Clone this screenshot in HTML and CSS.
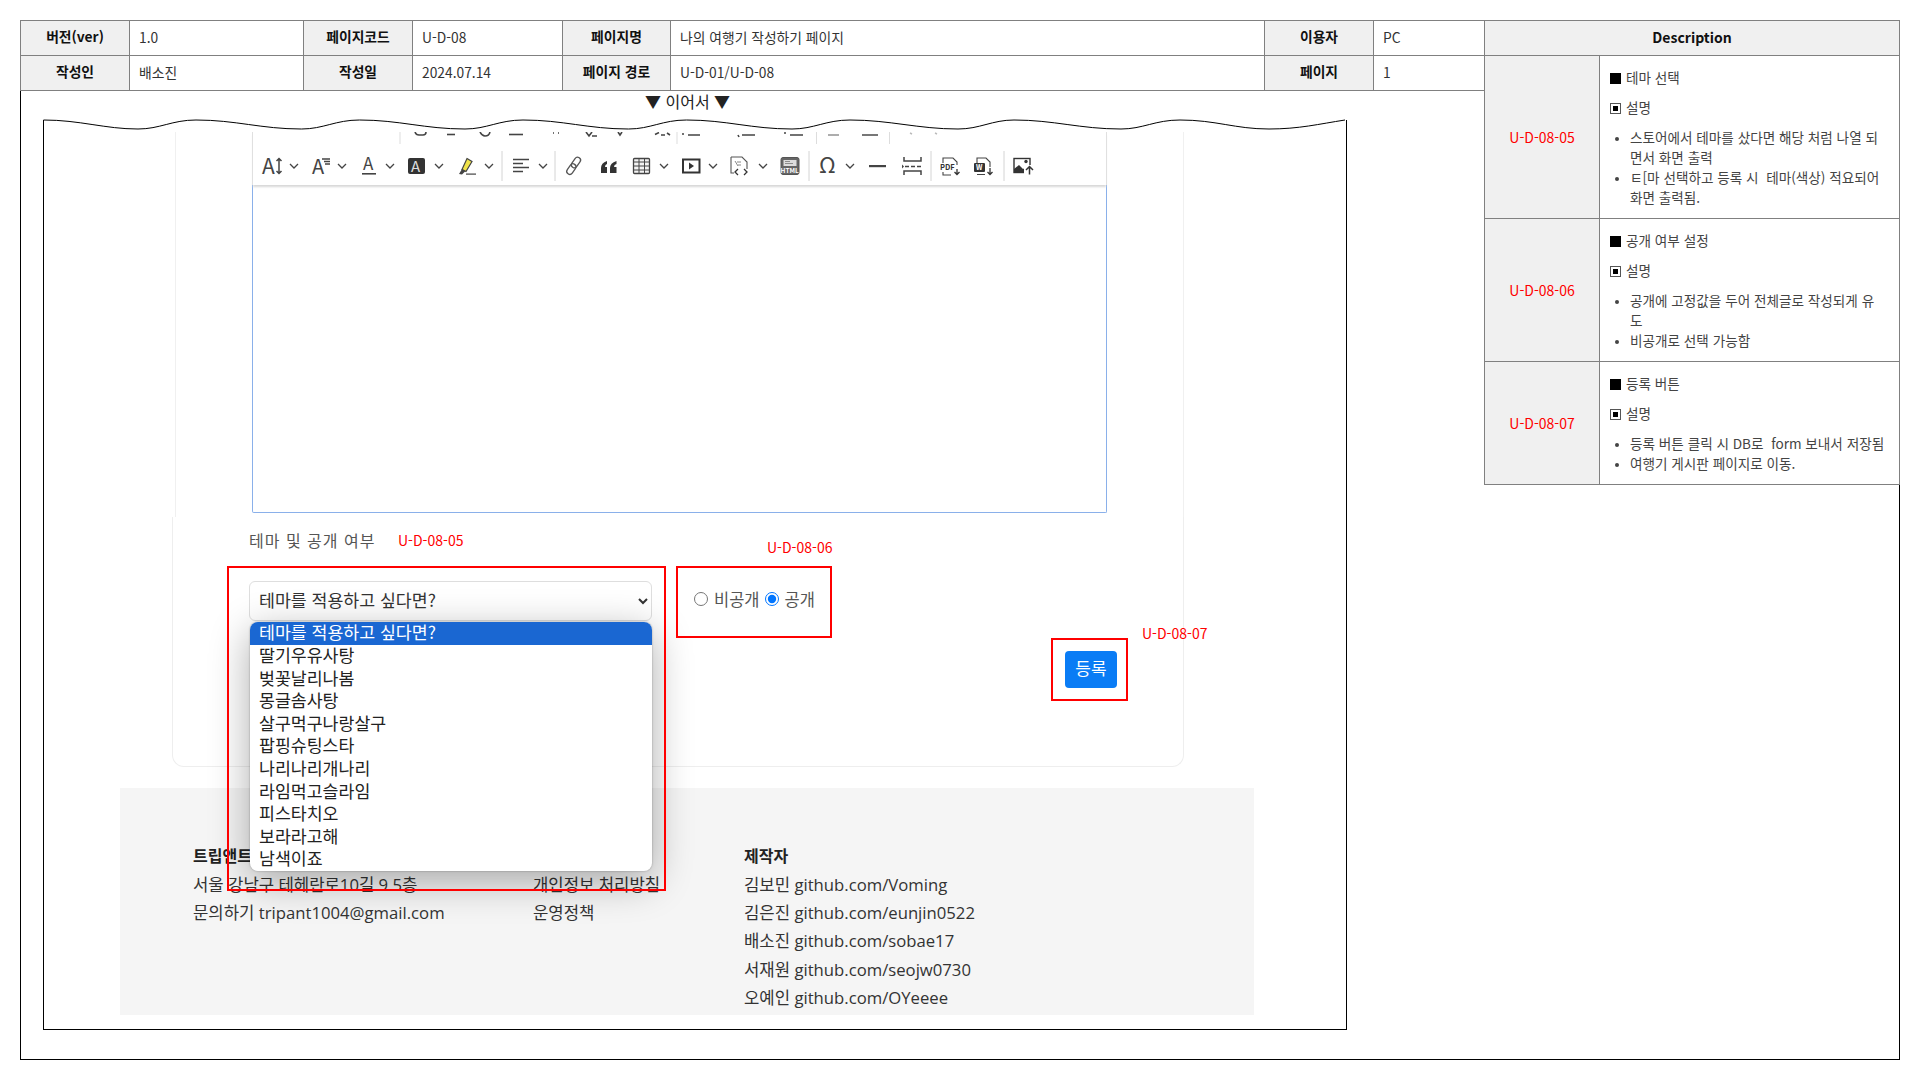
FILE: index.html
```html
<!DOCTYPE html>
<html lang="ko">
<head>
<meta charset="utf-8">
<title>나의 여행기 작성하기 페이지</title>
<link rel="stylesheet" href="styles.css">
</head>
<body>
<div class="sheet">
  <div class="left">
    <div class="meta">
      <div class="th">버전(ver)</div><div class="td">1.0</div>
      <div class="th">페이지코드</div><div class="td">U-D-08</div>
      <div class="th">페이지명</div><div class="td">나의 여행기 작성하기 페이지</div>
      <div class="th">이용자</div><div class="td">PC</div>
      <div class="th">작성인</div><div class="td">배소진</div>
      <div class="th">작성일</div><div class="td">2024.07.14</div>
      <div class="th">페이지 경로</div><div class="td">U-D-01/U-D-08</div>
      <div class="th">페이지</div><div class="td">1</div>
    </div>
    <div class="continued">▼ 이어서 ▼</div>
    <div class="frame">
      <svg class="wave" viewBox="43 117 1305 13" width="1305" height="13">
        <path d="M43.5 119 C80 119 105 128 138 128 c22 0 34 -9 58 -9 c40 0 65 9 105.5 9 c22 0 34 -9 58 -9 c40 0 65 9 105.5 9 c22 0 34 -9 58 -9 c40 0 65 9 105.5 9 c22 0 34 -9 58 -9 c40 0 65 9 105.5 9 c22 0 34 -9 58 -9 c40 0 68 9 108 9 c22 0 34 -9 56 -9 c40 0 66 9 107 9 c22 0 34 -9 59 -9 c36 0 55 9 89 9 c30 0 50 -5 76 -9" fill="none" stroke="#000" stroke-width="1"/>
      </svg>
      <div class="card-upper">
        <div class="editor">
          <div class="toolbar">
            <svg class="tb-clip" viewBox="253 131 854 15" width="854" height="15">
              <text x="265" y="128" class="tb-para">Paragraph</text>
              <g fill="none" stroke="#444" stroke-width="1.6">
                <path d="M415 131 q1 3 4 3 h4 q3 0 3 -3"/><path d="M447 133.500 h8"/><path d="M480 131 q2 4 5 4 q4 0 5 -4"/><path d="M509 133.500 h14"/>
                <path d="M553 132 h1 M558 132 h1"/><path d="M586 131 l3 4 l3 -4 M592 135 h5"/><path d="M618 131 l2 3 l2 -3"/>
                <path d="M655 133.500 l4 -2 M661 134 h4 M667 132 l3 2"/>
                <path d="M688 134 h12 M682 133 h2"/><path d="M742 134 h13 M738 134 l1 2"/><path d="M790 134 h13 M784 132 h2"/>
              </g>
              <g stroke="#999" stroke-width="1.6"><path d="M828 134 h11"/></g>
              <g stroke="#555" stroke-width="1.6"><path d="M862 134 h16"/></g>
              <g stroke="#bbb" stroke-width="1.4"><path d="M910 132 l2 1 M935 132 l2 1"/></g>
              <g stroke="#ddd" stroke-width="1"><path d="M400 131 v12 M677 131 v12 M816.500 131 v12 M889.500 131 v12"/></g>
            </svg>
            <svg class="tb-main" viewBox="253 146 854 38" width="854" height="38">
              <g class="seps" stroke="#d4d4d4" stroke-width="1"><path d="M502 150 v30 M555 150 v30 M809 150 v30 M931 150 v30 M1004 150 v30"/></g>
              <g fill="none" stroke="#444" stroke-width="1.3">
                <path d="M290 163 l4 4 l4 -4 M338 163 l4 4 l4 -4 M386 163 l4 4 l4 -4 M435 163 l4 4 l4 -4 M485 163 l4 4 l4 -4 M539 163 l4 4 l4 -4 M660 163 l4 4 l4 -4 M709 163 l4 4 l4 -4 M759 163 l4 4 l4 -4 M846 163 l4 4 l4 -4"/>
              </g>
              <text x="262" y="172.500" class="ic-a l">A</text>
              <path d="M279 158 v14 M276.500 160 l2.500 -2.500 l2.500 2.500 M276.500 170 l2.500 2.500 l2.500 -2.500" fill="none" stroke="#444" stroke-width="1.500"/>
              <text x="312" y="172.500" class="ic-a m">A</text>
              <path d="M322 158 h8 M324 160.500 h6 M325 163 h5" stroke="#444" stroke-width="1.300"/>
              <text x="363" y="169" class="ic-a s">A</text>
              <rect x="362" y="172" width="14" height="1.600" fill="#444"/>
              <rect x="408" y="157" width="17" height="16" rx="2" fill="#333"/>
              <text x="411" y="170.500" class="ic-a w">A</text>
              <path d="M467 157.500 l5 3 l-6 10 l-4 -2 z" fill="#f0e34a" stroke="#444" stroke-width="1.200"/>
              <path d="M462 168 l3.500 2 l-3.500 3.500 l-3 -.5 z" fill="#444"/>
              <rect x="466" y="172.500" width="10" height="1.200" fill="#444"/>
              <path d="M513 158.500 h16 M513 162.500 h10 M513 166.500 h16 M513 170.500 h10" stroke="#444" stroke-width="1.400"/>
              <g fill="none" stroke="#555" stroke-width="1.300" transform="rotate(35 573.500 165)">
                <rect x="570.500" y="155" width="6" height="11.500" rx="3"/>
                <rect x="570.500" y="163" width="6" height="11.500" rx="3"/>
              </g>
              <path d="M601 172 v-5 q0 -5 6 -7 v3 q-2 .5 -2 3 h2 v6 z M610 172 v-5 q0 -5 6.500 -7 v3 q-2.500 .5 -2.500 3 h2.500 v6 z" fill="#333"/>
              <rect x="633.500" y="157.500" width="16" height="15" rx="1" fill="#f3f3f3" stroke="#444" stroke-width="1.300"/>
              <path d="M633.500 161 h16 M633.500 165 h16 M633.500 169 h16 M639 158 v14 M644.500 158 v14" stroke="#444" stroke-width="1"/>
              <rect x="683" y="158.500" width="16.500" height="13" fill="#fff" stroke="#333" stroke-width="2"/>
              <path d="M689 161.500 l5 3.500 l-5 3.500 z" fill="#333"/>
              <path d="M731 156 h11 l5 5 v7 M731 156 v16 h3" fill="none" stroke="#555" stroke-width="1.100"/>
              <path d="M735 160 l3 5 M737 161 h4 M738 164 h3" stroke="#888" stroke-width="1"/>
              <path d="M738 168 l-3 3 l3 3 M744 168 l3 3 l-3 3" fill="none" stroke="#333" stroke-width="1.300"/>
              <rect x="781" y="156.500" width="18" height="17" rx="2" fill="#666" stroke="#555"/>
              <rect x="783.500" y="159" width="13" height="6" fill="#ddd"/>
              <path d="M785 160.500 h5 M785 162.500 h8" stroke="#777" stroke-width=".8"/>
              <text x="780.500" y="171.500" class="ic-html">HTML</text>
              <text x="819" y="172" class="ic-a om">Ω</text>
              <rect x="869" y="164" width="17" height="2.200" fill="#444"/>
              <path d="M904 156 v4 h17 v-4 M904 174 v-4 h17 v4" fill="none" stroke="#444" stroke-width="1.500"/>
              <path d="M905 165.500 h4 M911 165.500 h4 M917 165.500 h4" stroke="#444" stroke-width="1.400"/>
              <path d="M902 163.500 l2 2 l-2 2 z" fill="#444"/>
              <path d="M943 171 v3 h8 M943 162 v-5 h10 l4 4 v3" fill="none" stroke="#444" stroke-width="1.100"/>
              <text x="940" y="169" class="ic-pdf">PDF</text>
              <path d="M957 168 v5.500 M954.500 171 l2.500 2.500 l2.500 -2.500" fill="none" stroke="#333" stroke-width="1.300"/>
              <path d="M977 162 v-5 h9 l4 4 v5 M977 173.500 h8" fill="none" stroke="#444" stroke-width="1.100"/>
              <rect x="974" y="162" width="11" height="9" rx="1" fill="#333"/>
              <text x="976" y="169" class="ic-w">W</text>
              <path d="M990 167 v6.500 M987.500 171 l2.500 2.500 l2.500 -2.500" fill="none" stroke="#333" stroke-width="1.300"/>
              <rect x="1014" y="157.500" width="16" height="14" fill="#fff" stroke="#333" stroke-width="1.400"/>
              <path d="M1014 172 v-4 l5 -4 l4 4 l2 -1 v5 z" fill="#333"/>
              <circle cx="1026" cy="160.500" r="1.700" fill="#333"/>
              <rect x="1024" y="164" width="11" height="10" fill="#fff"/>
              <path d="M1029.500 173.500 v-8 M1026 169 l3.500 -3.500 l3.500 3.500" fill="none" stroke="#333" stroke-width="1.500"/>
            </svg>
          </div>
          <div class="editor-body"></div>
        </div>
      </div>
      <div class="card-lower">
        <div class="section-title">테마 및 공개 여부</div>
        <div class="controls">
          <div class="select-wrap">
            <select class="theme-select"><option>테마를 적용하고 싶다면?</option></select>
            <ul class="dropdown">
              <li class="on">테마를 적용하고 싶다면?</li>
              <li>딸기우유사탕</li>
              <li>벚꽃날리나봄</li>
              <li>몽글솜사탕</li>
              <li>살구먹구나랑살구</li>
              <li>팝핑슈팅스타</li>
              <li>나리나리개나리</li>
              <li>라임먹고슬라임</li>
              <li>피스타치오</li>
              <li>보라라고해</li>
              <li>남색이죠</li>
            </ul>
          </div>
          <div class="radios">
            <input type="radio" name="open" id="r1"><label for="r1">비공개</label>
            <input type="radio" name="open" id="r2" checked><label for="r2">공개</label>
          </div>
        </div>
        <div class="btn-row"><button class="submit" type="button">등록</button></div>
      </div>
      <footer class="site-footer">
        <div class="f-col f1">
          <div class="f-title">트립앤트</div>
          <div class="f-line">서울 강남구 테헤란로10길 9 5층</div>
          <div class="f-line">문의하기 tripant1004@gmail.com</div>
        </div>
        <div class="f-col f2">
          <div class="f-title">&nbsp;</div>
          <div class="f-line">개인정보 처리방침</div>
          <div class="f-line">운영정책</div>
        </div>
        <div class="f-col f3">
          <div class="f-title">제작자</div>
          <div class="f-line">김보민 github.com/Voming</div>
          <div class="f-line">김은진 github.com/eunjin0522</div>
          <div class="f-line">배소진 github.com/sobae17</div>
          <div class="f-line">서재원 github.com/seojw0730</div>
          <div class="f-line">오예인 github.com/OYeeee</div>
        </div>
      </footer>
      <div class="red-box box-a"></div>
      <div class="red-box box-b"></div>
      <div class="red-box box-c"></div>
      <span class="tag tag-a">U-D-08-05</span>
      <span class="tag tag-b">U-D-08-06</span>
      <span class="tag tag-c">U-D-08-07</span>
    </div>
  </div>
  <aside class="desc">
    <div class="desc-head">Description</div>
    <div class="desc-row r1">
      <div class="desc-id">U-D-08-05</div>
      <div class="desc-body">
        <p class="d-title"><i class="sq"></i>테마 선택</p>
        <p class="d-sub"><i class="sq2"></i>설명</p>
        <ul>
          <li>스토어에서 테마를 샀다면 해당 처럼 나열 되<br>면서 화면 출력</li>
          <li>ㅌ[마 선택하고 등록 시&nbsp; 테마(색상) 적요되어<br>화면 출력됨.</li>
        </ul>
      </div>
    </div>
    <div class="desc-row r2">
      <div class="desc-id">U-D-08-06</div>
      <div class="desc-body">
        <p class="d-title"><i class="sq"></i>공개 여부 설정</p>
        <p class="d-sub"><i class="sq2"></i>설명</p>
        <ul>
          <li>공개에 고정값을 두어 전체글로 작성되게 유<br>도</li>
          <li>비공개로 선택 가능함</li>
        </ul>
      </div>
    </div>
    <div class="desc-row r3">
      <div class="desc-id">U-D-08-07</div>
      <div class="desc-body">
        <p class="d-title"><i class="sq"></i>등록 버튼</p>
        <p class="d-sub"><i class="sq2"></i>설명</p>
        <ul>
          <li>등록 버튼 클릭 시 DB로&nbsp; form 보내서 저장됨</li>
          <li>여행기 게시판 페이지로 이동.</li>
        </ul>
      </div>
    </div>
  </aside>
</div>
</body>
</html>
```

FILE: styles.css
```css
* { box-sizing: border-box; }
html, body { margin: 0; padding: 0; background: #fff; }
body { font-family: "Noto Sans CJK KR", "Noto Sans", sans-serif; color: #333; width: 1920px; height: 1080px; overflow: hidden; }

.sheet {
  margin: 20px 0 0 20px;
  width: 1880px;
  height: 1040px;
  border-left: 1px solid #000;
  border-right: 1px solid #000;
  border-bottom: 1px solid #000;
  display: flex;
  align-items: flex-start;
}
.left { width: 1463px; flex: none; }

.meta {
  margin-left: -1px;
  width: 1465px;
  display: grid;
  grid-template-columns: 109px 174px 109px 150px 108px 594px 109px 111px;
  grid-auto-rows: 35px;
  border-top: 1px solid #808080;
  border-left: 1px solid #808080;
}
.th, .td {
  border-right: 1px solid #808080;
  border-bottom: 1px solid #808080;
  font-size: 13.800px;
  padding-bottom: 2px;
  display: flex;
  align-items: center;
}
.th { background: #f0f0f0; font-weight: 700; color: #111; justify-content: center; padding-bottom: 4px; }
.td { padding-left: 9px; color: #333; }

.continued {
  height: 29px;
  padding-left: 624px;
  font-size: 16px;
  line-height: 20px;
  color: #222;
}

.frame {
  position: relative;
  margin-left: 22px;
  width: 1304px;
  height: 910px;
  padding-top: 12px;
  border-left: 1px solid #000;
  border-right: 1px solid #000;
  border-bottom: 1px solid #000;
}
.wave { position: absolute; left: -1px; top: -2px; display: block; }

.card-upper {
  margin-left: 131px;
  width: 1009px;
  height: 385px;
  padding-left: 76px;
  border-left: 1px solid #f0f0f0;
  border-right: 1px solid #f0f0f0;
}
.editor { width: 855px; }
.toolbar {
  height: 53px;
  background: #fff;
  border-left: 1px solid #e0e0e0;
  border-right: 1px solid #e0e0e0;
  box-shadow: 0 3px 2px -1px #d8d8d8;
  position: relative;
  z-index: 1;
}
.toolbar svg { display: block; }
.tb-para { font-size: 13px; fill: #777; }
.ic-a { fill: #444; }
.ic-a.l { font-size: 21px; }
.ic-a.m { font-size: 20px; }
.ic-a.s { font-size: 17px; }
.ic-a.w { font-size: 15px; fill: #ddd; }
.ic-a.om { font-size: 22px; }
.ic-html { font-size: 6.500px; font-weight: 700; fill: #fff; }
.ic-pdf { font-size: 7.500px; font-weight: 700; fill: #333; }
.ic-w { font-size: 7px; font-weight: 700; fill: #fff; }
.editor-body {
  height: 328px;
  background: #fff;
  border: 1px solid #8ab0ea;
  border-top: none;
  border-radius: 0 0 2px 2px;
}

.card-lower {
  margin-left: 128px;
  width: 1012px;
  height: 250px;
  padding: 13px 0 0 76px;
  border-left: 1px solid #eee;
  border-right: 1px solid #eee;
  border-bottom: 1px solid #eee;
  border-radius: 0 0 12px 12px;
}
.section-title {
  height: 20px;
  line-height: 20px;
  font-size: 16px;
  letter-spacing: 1px;
  color: #555;
}
.controls { margin-top: 31px; display: flex; align-items: center; height: 40px; }
.select-wrap { position: relative; width: 403px; height: 40px; flex: none; }
.theme-select {
  width: 100%;
  height: 40px;
  padding: 0 5px 3px;
  font: 17.300px "Noto Sans CJK KR", sans-serif;
  color: #333;
  background: #fff;
  border: 1px solid #dedede;
  border-radius: 6px;
}
.dropdown {
  position: absolute;
  z-index: 3;
  left: 1px;
  top: 41px;
  width: 402px;
  height: 249px;
  margin: 0;
  padding: 0;
  list-style: none;
  background: #fff;
  border-radius: 8px;
  overflow: hidden;
  box-shadow: 0 0 2px rgba(0,0,0,.35);
}
.select-wrap::after {
  content: "";
  position: absolute;
  z-index: 2;
  left: 1px;
  top: 41px;
  width: 402px;
  height: 249px;
  border-radius: 8px;
  box-shadow: 0 10px 40px rgba(0,0,0,.33);
}
.dropdown li {
  height: 22.600px;
  line-height: 19px;
  padding-left: 9px;
  font-size: 17.300px;
  color: #222;
  white-space: nowrap;
}
.dropdown li.on { height: 23px; line-height: 20px; background: #1a67d2; color: #fff; }

.radios { margin-left: 42px; display: flex; align-items: center; font-size: 16.500px; line-height: 24px; color: #555; margin-top: -4px; }
.radios input { margin: 0 6px 0 0; width: 14px; height: 14px; }
.radios label { margin-right: 5px; }

.btn-row { margin-top: 30px; display: flex; justify-content: flex-end; padding-right: 66px; }
.submit {
  width: 52px;
  height: 37px;
  padding: 0 0 4px;
  border: none;
  border-radius: 4px;
  background: #0a7cf5;
  color: #fff;
  font: 17px "Noto Sans CJK KR", sans-serif;
}

.site-footer {
  margin: 21px 0 0 76px;
  width: 1134px;
  height: 227px;
  padding: 54px 0 0 73px;
  background: #f5f5f5;
  display: flex;
  align-items: flex-start;
  font-family: "Open Sans", "Noto Sans CJK KR", sans-serif;
  font-size: 16.700px;
  color: #333;
}
.f1 { width: 340px; }
.f2 { width: 211px; }
.f-title { height: 28px; line-height: 28px; font-size: 16px; font-weight: 700; color: #222; }
.f-line { height: 28.200px; line-height: 29px; white-space: nowrap; }

.red-box { position: absolute; border: 2px solid #f00; z-index: 4; }
.box-a { left: 183px; top: 446px; width: 439px; height: 325px; }
.box-b { left: 632px; top: 446px; width: 156px; height: 72px; }
.box-c { left: 1007px; top: 518px; width: 77px; height: 63px; }
.tag { position: absolute; color: #f00; font-size: 14px; line-height: 18px; white-space: nowrap; z-index: 4; }
.tag-a { left: 354px; top: 411px; }
.tag-b { left: 723px; top: 418px; }
.tag-c { left: 1098px; top: 504px; }

.desc {
  width: 416px;
  flex: none;
  margin-right: -1px;
  border-left: 1px solid #808080;
  border-right: 1px solid #808080;
  border-top: 1px solid #808080;
  background: #fff;
}
.desc-head {
  height: 35px;
  background: #f0f0f0;
  border-bottom: 1px solid #808080;
  padding-bottom: 3px;
  display: flex;
  align-items: center;
  justify-content: center;
  font-size: 14px;
  font-weight: 700;
  color: #111;
}
.desc-row { display: flex; border-bottom: 1px solid #808080; }
.r1 { height: 163px; }
.r2 { height: 143px; }
.r3 { height: 123px; }
.desc-id {
  width: 115px;
  flex: none;
  background: #f0f0f0;
  border-right: 1px solid #808080;
  color: #f00;
  font-size: 14px;
  display: flex;
  align-items: center;
  justify-content: center;
}
.desc-body { flex: 1; padding: 11px 0 0 10px; font-size: 13.600px; line-height: 20px; color: #444; }
.desc-body p { margin: 0 0 10px; display: flex; align-items: center; }
.sq { width: 11px; height: 11px; background: #000; margin-right: 5px; display: block; margin-top: 2px; }
.sq2 { width: 11px; height: 11px; border: 1px solid #555; margin-right: 5px; display: block; position: relative; margin-top: 2px; }
.sq2::after { content: ""; position: absolute; left: 2px; top: 2px; width: 5px; height: 5px; background: #000; }
.desc-body ul { margin: 0; padding: 0 0 0 20px; white-space: nowrap; }
.desc-body li { margin: 0; }
.desc-body li::marker { font-size: 11px; }
```
